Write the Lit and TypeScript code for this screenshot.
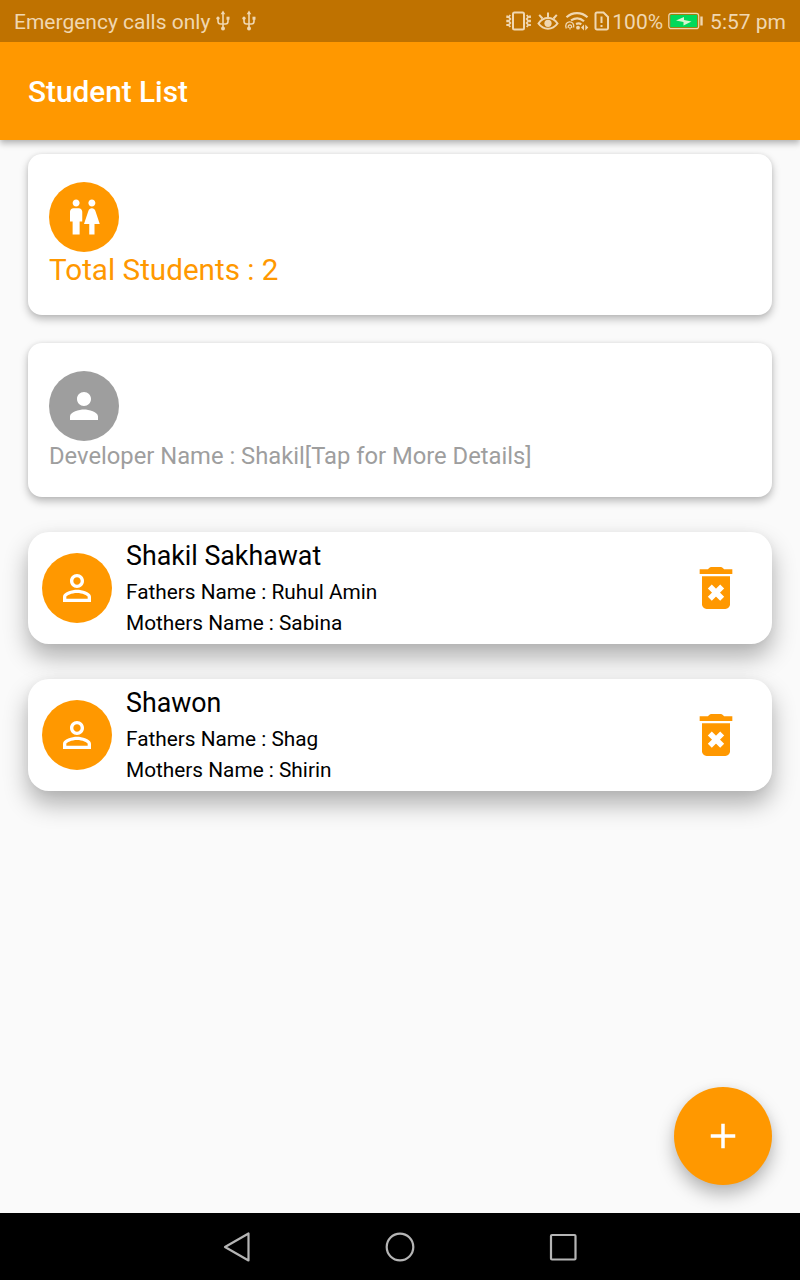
import { LitElement, html, css } from "lit";
import { customElement, property } from "lit/decorators.js";

const WC = "M5.5 22v-7.5H4V9c0-1.1.9-2 2-2h3c1.1 0 2 .9 2 2v5.5H9.5V22h-4zM18 22v-6h3l-2.54-7.63C18.18 7.55 17.42 7 16.56 7h-.12c-.86 0-1.63.55-1.9 1.37L12 16h3v6h3zM7.5 6c1.11 0 2-.89 2-2s-.89-2-2-2-2 .89-2 2 .89 2 2 2zm9 0c1.11 0 2-.89 2-2s-.89-2-2-2-2 .89-2 2 .89 2 2 2z";
const PERSON = "M12 12c2.21 0 4-1.79 4-4s-1.79-4-4-4-4 1.79-4 4 1.79 4 4 4zm0 2c-2.67 0-8 1.34-8 4v2h16v-2c0-2.66-5.33-4-8-4z";
const PERSON_OUTLINE = "M12 5.9c1.16 0 2.1.94 2.1 2.1s-.94 2.1-2.1 2.1S9.9 9.16 9.9 8s.94-2.1 2.1-2.1m0 9c2.97 0 6.1 1.46 6.1 2.1v1.1H5.9V17c0-.64 3.13-2.1 6.1-2.1M12 4C9.79 4 8 5.79 8 8s1.79 4 4 4 4-1.79 4-4-1.79-4-4-4zm0 9c-2.67 0-8 1.34-8 4v3h16v-3c0-2.66-5.33-4-8-4z";
const ADD = "M19 13h-6v6h-2v-6H5v-2h6V5h2v6h6v2z";

const glyph = (d: string) => html`<svg class="glyph" viewBox="0 0 24 24"><path d=${d}></path></svg>`;

const usb = () => html`<svg class="usb" width="14" height="22" viewBox="0 0 14 22">
  <g fill="none" stroke="currentColor" stroke-width="1.6">
    <path d="M7 3v15M2 9v2.2c0 2 1 2.8 2.6 2.8h4.8c1.6 0 2.6-.8 2.6-2.8V9"></path>
  </g>
  <g fill="currentColor"><path d="M7 .6l2.3 3.6H4.7z"></path><circle cx="7" cy="18.5" r="2"></circle>
  <circle cx="2" cy="8.2" r="1.6"></circle><path d="M10.5 6.7h3v3h-3z"></path></g>
</svg>`;

@customElement("student-row")
class StudentRow extends LitElement {
  @property() name = "";
  @property() father = "";
  @property() mother = "";
  static styles = css`
    :host { display: flex; align-items: center; height: 112px; box-sizing: border-box; padding: 0 27.6px 0 14px;
      background: #fff; border-radius: 21px; color: #000;
      box-shadow: 0 13px 24px rgba(0,0,0,.3), 0 0 8px rgba(0,0,0,.04); }
    .avatar { width: 70px; height: 70px; border-radius: 50%; background: #ff9800; display: grid; place-items: center; }
    .glyph { display: block; width: 42px; height: 42px; fill: #fff; }
    .info { flex: 1; margin-left: 14px; padding-top: 3px; }
    .name { font-size: 26.775px; line-height: 32px; margin-bottom: 5px; }
    .line { font-size: 20.8px; line-height: 31px; }
    .trash { display: block; width: 56px; height: 56px; fill: #ff9800; }
  `;
  render() {
    return html`
      <div class="avatar">${glyph(PERSON_OUTLINE)}</div>
      <div class="info">
        <div class="name">${this.name}</div>
        <div class="line">Fathers Name : ${this.father}</div>
        <div class="line">Mothers Name : ${this.mother}</div>
      </div>
      <svg class="trash" viewBox="0 0 24 24">
        <path d="M15.5 4l-.7-.7q-.3-.3-.7-.3H9.9q-.4 0-.7.3L8.5 4H5v2h14V4z"></path>
        <path d="M6 7h12v12c0 1.1-.9 2-2 2H8c-1.1 0-2-.9-2-2z"></path>
        <path d="M9.35 11.35l5.3 5.3M14.65 11.35l-5.3 5.3" stroke="#fff" stroke-width="2.4"></path>
      </svg>`;
  }
}

@customElement("app-root")
class AppRoot extends LitElement {
  static styles = css`
    :host { display: flex; flex-direction: column; position: relative; width: 800px; height: 1280px; overflow: hidden;
      background: #fafafa; font-family: Roboto, sans-serif; }
    .status { height: 42px; flex: none; background: #bf7200; color: #f0d7b1; display: flex; align-items: center; padding: 0 14px;
      box-sizing: border-box; font-size: 21px; position: relative; z-index: 1; }
    .status svg { display: block; flex: none; }
    .carrier { width: 202px; white-space: nowrap; line-height: 24px; padding-top: 2px; }
    .usb { margin-right: 12px; }
    .tray { margin-left: auto; display: flex; align-items: center; line-height: 24px; }
    .pct, .time { padding-top: 2px; }
    .battery { margin: 0 7px 0 5px; }
    .bar { height: 98px; flex: none; background: #ff9800; display: flex; align-items: center; padding: 0 28px;
      box-sizing: border-box; box-shadow: 0 4px 6px rgba(0,0,0,.24), 0 0 4px rgba(0,0,0,.08); }
    .title { color: #fff; font-size: 29.75px; font-weight: 500; }
    .body { flex: 1; padding: 14px 28px 0; }
    .card { box-sizing: border-box; background: #fff; border-radius: 14px; padding: 28px 21px 0;
      box-shadow: 0 4px 8px rgba(0,0,0,.27), 0 0 4px rgba(0,0,0,.06); }
    .total { height: 161px; margin-bottom: 28px; }
    .dev { height: 154px; margin-bottom: 35px; }
    .avatar { width: 70px; height: 70px; border-radius: 50%; display: grid; place-items: center; }
    .orange { background: #ff9800; }
    .grey { background: #9e9e9e; }
    .glyph { display: block; width: 42px; height: 42px; fill: #fff; }
    .count { color: #ff9800; font-size: 29.65px; line-height: 36px; }
    .devname { color: #9e9e9e; font-size: 23.77px; line-height: 30px; }
    student-row + student-row { margin-top: 35px; }
    .fab { position: absolute; right: 28px; bottom: 95px; width: 98px; height: 98px; border-radius: 50%; border: 0; padding: 0;
      background: #ff9800; display: grid; place-items: center;
      box-shadow: 0 9px 18px rgba(0,0,0,.28), 0 0 8px rgba(0,0,0,.04); }
    .nav { height: 67px; flex: none; background: #000; display: flex; justify-content: center; }
    .nav svg { display: block; fill: none; stroke: #b5b5b5; stroke-width: 2.2; stroke-linejoin: round; }
  `;
  render() {
    return html`
      <div class="status">
        <span class="carrier">Emergency calls only</span>${usb()}${usb()}
        <div class="tray">
          <svg width="106" height="24" viewBox="506 9 106 24" fill="none" stroke="currentColor" stroke-width="2">
            <rect x="513" y="12.5" width="11" height="17" rx="1.5"></rect>
            <path stroke-width="1.8" d="M510.3 15l-1.6 2 1.6 2-1.6 2 1.6 2-1.6 2 1.6 2M507.2 15.5v2.5M507.2 19.7v2.5M507.2 24v2M526.7 15l1.6 2-1.6 2 1.6 2-1.6 2 1.6 2-1.6 2M530 15.500v2.500M530 19.700v2.500M530 24v2"></path>
            <path d="M538.5 23.5c5-7.3 14-7.3 19 0-5 7-14 7-19 0z"></path>
            <circle cx="548" cy="23.3" r="3.6" fill="currentColor" stroke="none"></circle>
            <path d="M548 17.5v-5M542.5 18.5l-3.300-3.700M553.500 18.500l3.300-3.700"></path>
            <path stroke-width="2.2" d="M566.5 17.2c6-5.500 15-5.500 21 0M571 20.400c4.500-2.800 9.500-2.300 13 .8M576 24c2-.8 3.800-.7 5.300.4"></path>
            <path stroke-width="1.3" d="M566.300 28.500c-3.200-8.500 9-9 7.300-1M568.300 28c-1-4.200 4.200-4.200 3.300 0M570 29.500v-2.400"></path>
            <circle cx="578" cy="27.700" r="1.900" fill="currentColor" stroke="none"></circle>
            <path stroke="none" fill="currentColor" d="M584 24.500v6l-3-3zM585.300 24.500v6l3-3z"></path>
            <path d="M595.5 14a1.5 1.5 0 011.5-1.5h6.5l4.500 4.500V28a1.500 1.500 0 01-1.500 1.500H597a1.500 1.500 0 01-1.500-1.500z"></path>
            <path d="M601.5 16.500v6.500M601.500 25v2"></path>
          </svg>
          <span class="pct">100%</span>
          <svg class="battery" width="35" height="18" viewBox="0 0 35 18">
            <rect x=".8" y="1.3" width="29.9" height="15.4" rx="2.5" fill="none" stroke="currentColor" stroke-width="1.2"></rect>
            <rect x="2.3" y="2.8" width="26.900" height="12.400" fill="#00d95a"></rect>
            <path d="M8 8.500l8-3.500v3l7.500 1.500-8 4v-3.500z" fill="#d8f5d0"></path>
            <path d="M33.500 4.500v9" stroke="currentColor" stroke-width="2.400"></path>
          </svg>
          <span class="time">5:57 pm</span>
        </div>
      </div>
      <div class="bar"><span class="title">Student List</span></div>
      <div class="body">
        <div class="card total">
          <div class="avatar orange">${glyph(WC)}</div>
          <div class="count">Total Students : 2</div>
        </div>
        <div class="card dev">
          <div class="avatar grey">${glyph(PERSON)}</div>
          <div class="devname">Developer Name : Shakil[Tap for More Details]</div>
        </div>
        <student-row name="Shakil Sakhawat" father="Ruhul Amin" mother="Sabina"></student-row>
        <student-row name="Shawon" father="Shag" mother="Shirin"></student-row>
      </div>
      <button class="fab" aria-label="Add">${glyph(ADD)}</button>
      <div class="nav">
        <svg width="360" height="67" viewBox="220 1213 360 67">
          <path d="M248.5 1233.5v27l-23.5-13.5z"></path>
          <circle cx="400" cy="1247" r="13.3"></circle>
          <rect x="551" y="1235" width="24.5" height="24.5" rx="1"></rect>
        </svg>
      </div>`;
  }
}
